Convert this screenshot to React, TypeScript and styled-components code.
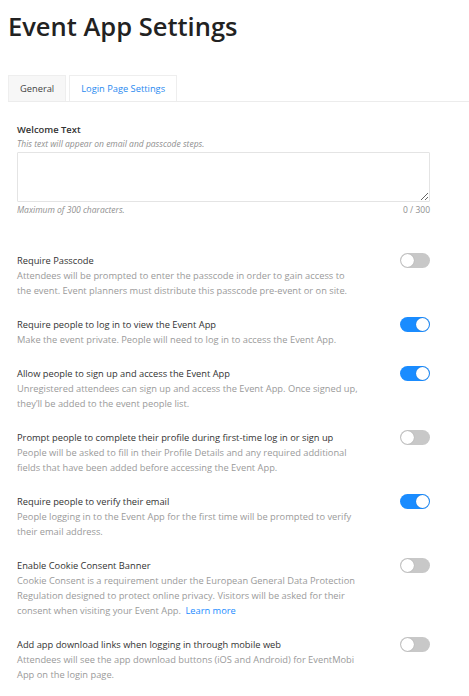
import React from 'react'
import styled, { createGlobalStyle } from 'styled-components'

const GlobalStyle = createGlobalStyle`
  body {
    margin: 0;
    background: #fff;
    font-family: "Open Sans", "Liberation Sans", sans-serif;
    color: #333;
  }
`

const Page = styled.div`
  padding: 8px 39px 0 8px;
`

const Heading = styled.h1`
  margin: 0;
  font-size: 25.5px;
  line-height: 36px;
  font-weight: 600;
  color: #222;
`

const Tabs = styled.div`
  margin-top: 31px;
  display: flex;
  gap: 3px;
  border-bottom: 1px solid #ececec;
  margin-right: -39px;
`

const Tab = styled.div<{ $active?: boolean }>`
  height: 25px;
  padding: 0 11px;
  display: flex;
  align-items: center;
  font-size: 9.3px;
  border: 1px solid #eeeeee;
  border-bottom: none;
  margin-bottom: ${(p) => (p.$active ? '-1px' : '0')};
  background: ${(p) => (p.$active ? '#fff' : '#f7f7f7')};
  color: ${(p) => (p.$active ? '#2a8af0' : '#444')};
`

const Section = styled.div`
  padding: 20px 0 0 9px;
`

const FieldLabel = styled.div`
  font-size: 9.4px;
  line-height: 15px;
  font-weight: 600;
  color: #333;
`

const Hint = styled.div`
  font-size: 8.5px;
  line-height: 14px;
  font-style: italic;
  color: #8f8f8f;
`

const TextArea = styled.textarea`
  display: block;
  box-sizing: border-box;
  width: 100%;
  height: 50px;
  margin-top: 1px;
  border: 1px solid #e4e4e4;
  border-radius: 1px;
  outline: none;
  font-family: inherit;
`

const Counter = styled.div`
  display: flex;
  justify-content: space-between;
  font-size: 8.5px;
  line-height: 16px;
  color: #8f8f8f;
`

const Italic = styled.span`
  font-style: italic;
`

const Options = styled.div`
  margin-top: 35px;
  display: flex;
  flex-direction: column;
  gap: 19px;
`

const Row = styled.div`
  display: flex;
  justify-content: space-between;
  align-items: flex-start;
`

const Text = styled.div`
  width: 342px;
  font-size: 9.3px;
  line-height: 15px;
`

const Title = styled.div`
  color: #333;
  white-space: nowrap;
`

const Desc = styled.div`
  color: #9a9a9a;
`

const Link = styled.a`
  color: #1a8cff;
  text-decoration: none;
  margin-left: 2px;
`

const Switch = styled.div<{ $on?: boolean }>`
  position: relative;
  flex: none;
  width: 30px;
  height: 15px;
  border-radius: 8px;
  background: ${(p) => (p.$on ? '#1a8cff' : '#c8c8c8')};
  &::after {
    content: '';
    position: absolute;
    top: 1px;
    left: ${(p) => (p.$on ? '16px' : '1px')};
    width: 13px;
    height: 13px;
    border-radius: 50%;
    background: #fff;
    box-shadow: 0 0 1px rgba(0, 0, 0, 0.3);
  }
`

const options: { title: string; desc: string; on: boolean; link?: boolean }[] = [
  {
    title: 'Require Passcode',
    desc: 'Attendees will be prompted to enter the passcode in order to gain access to the event. Event planners must distribute this passcode pre-event or on site.',
    on: false,
  },
  {
    title: 'Require people to log in to view the Event App',
    desc: 'Make the event private. People will need to log in to access the Event App.',
    on: true,
  },
  {
    title: 'Allow people to sign up and access the Event App',
    desc: 'Unregistered attendees can sign up and access the Event App. Once signed up, they’ll be added to the event people list.',
    on: true,
  },
  {
    title: 'Prompt people to complete their profile during first-time log in or sign up',
    desc: 'People will be asked to fill in their Profile Details and any required additional fields that have been added before accessing the Event App.',
    on: false,
  },
  {
    title: 'Require people to verify their email',
    desc: 'People logging in to the Event App for the first time will be prompted to verify their email address.',
    on: true,
  },
  {
    title: 'Enable Cookie Consent Banner',
    desc: 'Cookie Consent is a requirement under the European General Data Protection Regulation designed to protect online privacy. Visitors will be asked for their consent when visiting your Event App.',
    on: false,
    link: true,
  },
  {
    title: 'Add app download links when logging in through mobile web',
    desc: 'Attendees will see the app download buttons (iOS and Android) for EventMobi App on the login page.',
    on: false,
  },
]

export default function App() {
  return (
    <>
      <GlobalStyle />
      <Page>
        <Heading>Event App Settings</Heading>
        <Tabs>
          <Tab>General</Tab>
          <Tab $active>Login Page Settings</Tab>
        </Tabs>
        <Section>
          <FieldLabel>Welcome Text</FieldLabel>
          <Hint>This text will appear on email and passcode steps.</Hint>
          <TextArea />
          <Counter>
            <Italic>Maximum of 300 characters.</Italic>
            <span>0 / 300</span>
          </Counter>
          <Options>
            {options.map((o) => (
              <Row key={o.title}>
                <Text>
                  <Title>{o.title}</Title>
                  <Desc>
                    {o.desc}
                    {o.link && (
                      <>
                        {' '}
                        <Link href="#">Learn more</Link>
                      </>
                    )}
                  </Desc>
                </Text>
                <Switch $on={o.on} />
              </Row>
            ))}
          </Options>
        </Section>
      </Page>
    </>
  )
}
